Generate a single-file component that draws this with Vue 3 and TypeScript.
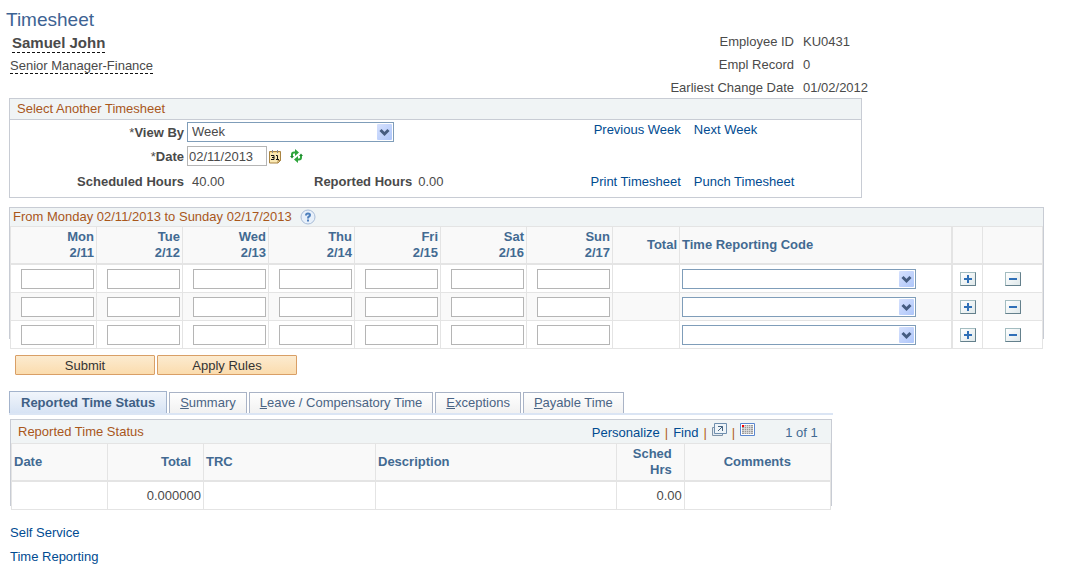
<script setup lang="ts">
import { ref } from 'vue'

interface Day {
  name: string
  date: string
}

interface TimeRow {
  hours: string[]
  code: string
}

const days: Day[] = [
  { name: 'Mon', date: '2/11' },
  { name: 'Tue', date: '2/12' },
  { name: 'Wed', date: '2/13' },
  { name: 'Thu', date: '2/14' },
  { name: 'Fri', date: '2/15' },
  { name: 'Sat', date: '2/16' },
  { name: 'Sun', date: '2/17' },
]

const tabs = ['Reported Time Status', 'Summary', 'Leave / Compensatory Time', 'Exceptions', 'Payable Time']
const activeTab = ref(0)
const viewBy = ref('Week')
const date = ref('02/11/2013')

const emptyRow = (): TimeRow => ({ hours: days.map(() => ''), code: '' })
const rows = ref<TimeRow[]>([emptyRow(), emptyRow(), emptyRow()])

function addRow(index: number) {
  rows.value.splice(index + 1, 0, emptyRow())
}

function removeRow(index: number) {
  if (rows.value.length > 1) rows.value.splice(index, 1)
}
</script>

<template>
  <main class="page">
    <header class="top">
      <div class="who">
        <h1>Timesheet</h1>
        <div><span class="name">Samuel John</span></div>
        <div><span class="role">Senior Manager-Finance</span></div>
      </div>
      <dl class="facts">
        <dt>Employee ID</dt>
        <dd>KU0431</dd>
        <dt>Empl Record</dt>
        <dd>0</dd>
        <dt>Earliest Change Date</dt>
        <dd>01/02/2012</dd>
      </dl>
    </header>

    <section class="selector">
      <h2>Select Another Timesheet</h2>
      <div class="fields">
        <label for="view-by"><i>*</i>View By</label>
        <div class="field">
          <span class="drop">
            <select id="view-by" v-model="viewBy">
              <option>Week</option>
            </select>
            <svg class="arrow" viewBox="0 0 15 16" aria-hidden="true">
              <path d="M3.5 6l4 4 4-4" />
            </svg>
          </span>
        </div>
        <a href="#" class="end">Previous Week</a>
        <a href="#" class="next">Next Week</a>

        <label for="date"><i>*</i>Date</label>
        <div class="field">
          <input id="date" v-model="date" type="text" class="date" />
          <button type="button" class="icon cal" aria-label="Choose a date">
            <svg width="13" height="14" viewBox="0 0 13 14">
              <path d="M.5 1.5h11v9l-2.500 2.500H.5z" fill="#fbe9b4" stroke="#a98442" />
              <path d="M1 2.500h10" stroke="#f6d78a" />
              <path d="M9 13v-2.500h2.500z" fill="#fff6d8" stroke="#a98442" />
              <path d="M3.500 0v3M8.500 0v3" stroke="#8c8c8c" />
              <path d="M2 5.500h3v4H2M3 7.500h2M7 5.500h1.500v4M7 9.500h3" fill="none" stroke="#111" />
            </svg>
          </button>
          <button type="button" class="icon" aria-label="Refresh">
            <svg width="13" height="14" viewBox="0 0 13 14">
              <g fill="none" stroke="#2fa53c" stroke-width="2">
                <path d="M2 8V5.500Q2 3.500 4 3.500h2" />
                <path d="M11 6v2.500q0 2-2 2H7" />
              </g>
              <path d="M5 0l4 3.500L5 7zM8 7v7l-4-3.500z" fill="#2fa53c" />
              <path d="M0 7h4L2 9.500zM9 7h4l-2-2.500z" fill="#1d8a2e" />
            </svg>
          </button>
        </div>
        <span></span>
        <span></span>

        <b class="caption">Scheduled Hours</b>
        <div class="field totals">
          <span class="scheduled">40.00</span>
          <b>Reported Hours</b>
          <span>0.00</span>
        </div>
        <a href="#" class="end low">Print Timesheet</a>
        <a href="#" class="next low">Punch Timesheet</a>
      </div>
    </section>

    <section class="panel week">
      <h2>
        From Monday 02/11/2013 to Sunday 02/17/2013
        <button type="button" class="icon help" aria-label="Help">
          <svg width="16" height="16" viewBox="0 0 16 16">
            <circle cx="8" cy="8" r="7" fill="#e8f0fa" stroke="#a9bdd8" />
            <path d="M6 6.500Q6 4.500 8 4.500t2 1.500q0 1-1 1.500T8 9.500" fill="none" stroke="#4f80bd" stroke-width="2" />
            <path d="M7 10.500h2v2H7z" fill="#4f80bd" />
          </svg>
        </button>
      </h2>
      <table>
        <colgroup>
          <col class="c-first" />
          <col v-for="d in 6" :key="d" class="c-day" />
          <col class="c-total" />
          <col />
          <col class="c-add" />
          <col class="c-remove" />
        </colgroup>
        <thead>
          <tr>
            <th v-for="d in days" :key="d.name" scope="col" class="num">{{ d.name }}<br />{{ d.date }}</th>
            <th scope="col" class="num">Total</th>
            <th scope="col" class="code">Time Reporting Code</th>
            <td></td>
            <td></td>
          </tr>
        </thead>
        <tbody>
          <tr v-for="(row, r) in rows" :key="r">
            <td v-for="(d, i) in days" :key="d.name" class="num">
              <input v-model="row.hours[i]" type="text" class="hours" :aria-label="`${d.name} ${d.date}, row ${r + 1}`" />
            </td>
            <td></td>
            <td class="code">
              <span class="drop trc">
                <select v-model="row.code" :aria-label="`Time Reporting Code, row ${r + 1}`">
                  <option value=""></option>
                </select>
                <svg class="arrow" viewBox="0 0 15 16" aria-hidden="true">
                  <path d="M3.5 6l4 4 4-4" />
                </svg>
              </span>
            </td>
            <td class="mid">
              <button type="button" class="step" aria-label="Add a row" @click="addRow(r)">
                <svg width="8" height="8" viewBox="0 0 8 8"><path d="M0 4h8M4 0v8" /></svg>
              </button>
            </td>
            <td class="mid">
              <button type="button" class="step" aria-label="Remove row" @click="removeRow(r)">
                <svg width="8" height="8" viewBox="0 0 8 8"><path d="M0 4h8" /></svg>
              </button>
            </td>
          </tr>
        </tbody>
      </table>
    </section>

    <div class="actions">
      <button type="button">Submit</button>
      <button type="button">Apply Rules</button>
    </div>

    <div class="tabs" role="tablist">
      <button
        v-for="(t, i) in tabs"
        :key="t"
        type="button"
        role="tab"
        :aria-selected="i === activeTab"
        :class="{ active: i === activeTab }"
        @click="activeTab = i"
      >
        <template v-if="i === activeTab">{{ t }}</template>
        <template v-else><u>{{ t.charAt(0) }}</u>{{ t.slice(1) }}</template>
      </button>
    </div>

    <section class="panel status">
      <div class="bar">
        <h2>Reported Time Status</h2>
        <nav class="tools">
          <a href="#">Personalize</a>
          <i>|</i>
          <a href="#">Find</a>
          <i>|</i>
          <button type="button" class="icon raised" aria-label="View all">
            <svg width="15" height="14" viewBox="0 0 15 14">
              <path d="M.5 4.500h10v8H.5z" fill="#e4ecf2" stroke="#7e93a8" />
              <path d="M2.500.5h12v10h-12z" fill="#eef4f8" stroke="#6f8fae" />
              <path d="M6 8l4.500-4.500M6 3.500h4.500V8" fill="none" stroke="#456482" />
            </svg>
          </button>
          <i>|</i>
          <button type="button" class="icon raised" aria-label="Download">
            <svg width="15" height="14" viewBox="0 0 15 14">
              <path d="M.5.5h14v12H.5z" fill="#fff" stroke="#5b87cf" />
              <path d="M2 2h11v9H2z" fill="#9a9a9a" />
              <path d="M2 3.500h11M2 5.500h11M2 7.500h11M2 9.500h11M4.500 2v9M6.500 2v9M8.500 2v9M10.500 2v9" stroke="#e4e4e4" stroke-width=".7" />
              <path d="M2 2h2v2H2z" fill="#f00" />
            </svg>
          </button>
          <span class="count">1 of 1</span>
        </nav>
      </div>
      <table>
        <colgroup>
          <col class="s-date" />
          <col class="s-total" />
          <col class="s-trc" />
          <col />
          <col class="s-hrs" />
          <col class="s-comments" />
        </colgroup>
        <thead>
          <tr>
            <th scope="col">Date</th>
            <th scope="col" class="num wide">Total</th>
            <th scope="col">TRC</th>
            <th scope="col">Description</th>
            <th scope="col" class="num wide">Sched Hrs</th>
            <th scope="col" class="mid">Comments</th>
          </tr>
        </thead>
        <tbody>
          <tr>
            <td></td>
            <td class="num">0.000000</td>
            <td></td>
            <td></td>
            <td class="num">0.00</td>
            <td></td>
          </tr>
        </tbody>
      </table>
    </section>

    <nav class="footer">
      <a href="#">Self Service</a>
      <a href="#">Time Reporting</a>
    </nav>
  </main>
</template>

<style>
body {
  margin: 0;
  background: #fff;
}
</style>

<style scoped>
.page {
  padding: 8px 28px 8px 9px;
  font: 13px/16px "Liberation Sans", Arial, sans-serif;
  color: #4a4a4a;
}

.page * {
  box-sizing: border-box;
}

h1,
h2 {
  margin: 0;
  font-weight: normal;
}

h2 {
  font-size: 13px;
  color: #a9571b;
}

a {
  color: #004b91;
  text-decoration: none;
}

i {
  font-style: normal;
}

input,
select,
button {
  margin: 0;
  font: inherit;
  color: inherit;
  border-radius: 0;
}

.icon {
  display: inline-flex;
  padding: 0;
  border: 0;
  background: none;
}

.top {
  display: flex;
  justify-content: space-between;
  padding-bottom: 2px;
}

.who h1 {
  margin-left: -3px;
  font-size: 19px;
  line-height: 24px;
  color: #3d6393;
}

.who div {
  padding-left: 1px;
}

.name,
.role {
  display: inline-block;
  border-bottom: 1px dashed #111;
}

.name {
  margin: 2px 0 5px 2px;
  font-size: 15px;
  line-height: 18px;
  font-weight: bold;
}

.role {
  line-height: 15px;
}

.facts {
  display: grid;
  grid-template-columns: auto 241px;
  gap: 7px 9px;
  margin: 26px 0 0;
}

.facts dt {
  text-align: right;
}

.facts dd {
  margin: 0;
}

.selector {
  width: 82.4%;
  min-width: 800px;
  border: 1px solid #c8ccd4;
}

.selector h2 {
  padding: 2px 6px 2px 7px;
  border: solid #c8ccd4;
  border-width: 0 0 1px;
  background: #f0f4f5;
}

.fields {
  display: grid;
  grid-template-columns: 174px 1fr 100px 180px;
  grid-template-rows: 20px 20px 20px;
  row-gap: 4px;
  padding: 2px 0 7px;
}

.fields label,
.caption {
  align-self: center;
  padding-top: 2px;
  font-weight: bold;
  text-align: right;
}

.fields label i {
  font-weight: normal;
}

.next {
  padding-left: 13px;
}

.end {
  text-align: right;
}

.caption,
.totals,
.low {
  padding-top: 4px;
}

.field {
  display: flex;
  align-items: center;
  gap: 2px;
  padding-left: 3px;
}

.totals {
  gap: 6px;
  padding-left: 8px;
}

.scheduled {
  width: 116px;
}

.drop {
  position: relative;
  display: block;
  width: 207px;
  height: 20px;
}

.trc {
  width: 234px;
  max-width: 100%;
}

select {
  width: 100%;
  height: 20px;
  padding: 0 18px 0 4px;
  appearance: none;
  border: 1px solid #7f9db9;
  background: #fff;
}

.arrow {
  position: absolute;
  top: 2px;
  right: 2px;
  width: 15px;
  height: 16px;
  border-radius: 1px;
  background: linear-gradient(135deg, #d6e1fd, #aec6fa);
  pointer-events: none;
}

.arrow path {
  fill: none;
  stroke: #455c80;
  stroke-width: 3;
}

.date,
.hours {
  height: 20px;
  padding: 0 1px;
  border: 1px solid #b5b5b5;
  background: #fff;
}

.date {
  width: 80px;
}

.cal {
  margin-right: 6px;
  padding-top: 2px;
}

.panel {
  display: flow-root;
  border: solid #c8ccd4;
  border-width: 1px 1px 0;
  background: #fff;
}

table {
  width: 100%;
  table-layout: fixed;
  border-collapse: separate;
  border-spacing: 0;
  border-top: 1px solid #e4e4e4;
  background: #fff;
}

th,
td {
  padding: 0 2px;
  border: solid #e4e4e4;
  border-width: 0 1px 1px 0;
  text-align: left;
}

th:first-child,
td:first-child {
  border-left-width: 1px;
}

thead th,
thead td {
  border-bottom-width: 2px;
  background: #f9f9f9;
  color: #426a92;
}

tbody tr:nth-child(even) td {
  background: #f9f9f9;
}

.num {
  text-align: right;
}

.mid {
  text-align: center;
}

.week {
  margin-top: 9px;
}

.week h2 {
  display: flex;
  align-items: center;
  gap: 8px;
  height: 18px;
  padding-left: 3px;
  background: #f0f4f5;
}

.week table {
  margin-bottom: -10px;
}

.week thead tr {
  height: 38px;
}

.week tbody tr {
  height: 28px;
}

.week .code {
  border-right-width: 2px;
}

.c-first {
  width: 87px;
}

.c-day {
  width: 86px;
}

.c-total {
  width: 67px;
}

.c-add {
  width: 30px;
}

.c-remove {
  width: 60px;
}

.hours {
  display: block;
  width: 73px;
  max-width: 100%;
  margin-left: auto;
}

.step {
  display: inline-flex;
  align-items: center;
  justify-content: center;
  width: 16px;
  height: 14px;
  padding: 0;
  vertical-align: middle;
  border: 1px solid;
  border-color: #a3bcc0 #64808c #64808c #a3bcc0;
  background: linear-gradient(135deg, #fff, #dfe8ea);
}

.step path {
  stroke: #2f6fb7;
  stroke-width: 2;
}

.actions {
  display: flex;
  gap: 2px;
  margin: 16px 0 16px 6px;
}

.actions button {
  width: 140px;
  height: 20px;
  padding: 2px 0 0;
  border: 1px solid #d99f66;
  border-radius: 1px;
  background: linear-gradient(#fcebd0, #fbdcae);
  color: #333;
}

.tabs {
  display: flex;
  align-items: flex-end;
  gap: 2px;
  width: 79.6%;
  min-width: 780px;
  border-bottom: 2px solid #dbe5f4;
}

.tabs button {
  height: 21px;
  padding: 0 10px;
  border: 1px solid #a9b3c6;
  border-bottom: 0;
  background: linear-gradient(#fff, #f1f1f1);
  color: #4a6484;
}

.tabs .active {
  height: 22px;
  padding: 0 11px;
  border-color: #a3b3cc;
  background: linear-gradient(#f1f5fb, #d7e3f4);
  font-weight: bold;
  color: #3f5f85;
}

.status {
  width: 79.4%;
  min-width: 780px;
  margin: 4px 0 0 1px;
}

.bar {
  display: flex;
  justify-content: space-between;
  height: 23px;
  padding: 4px 13px 0 7px;
  background: #f0f4f5;
}

.tools {
  display: flex;
  gap: 5px;
  padding-top: 1px;
}

.tools i {
  color: #b0601c;
}

.raised {
  align-self: flex-start;
  margin-top: -2px;
}

.count {
  margin-left: 25px;
  color: #426a92;
}

.status table {
  margin-bottom: -4px;
}

.status thead tr {
  height: 38px;
}

.status tbody tr {
  height: 28px;
}

.status .wide {
  padding-right: 12px;
}

.s-date {
  width: 97px;
}

.s-total {
  width: 96px;
}

.s-trc {
  width: 172px;
}

.s-hrs {
  width: 68px;
}

.s-comments {
  width: 146px;
}

.footer {
  display: flex;
  flex-direction: column;
  align-items: flex-start;
  gap: 8px;
  margin: 19px 0 0 1px;
}
</style>
